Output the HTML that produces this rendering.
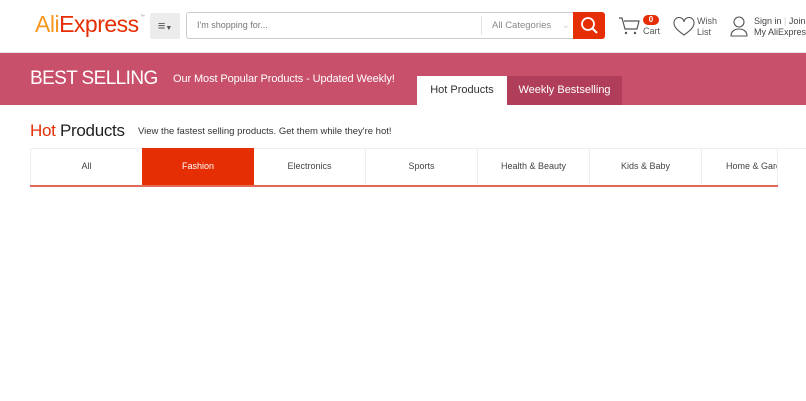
<!DOCTYPE html>
<html><head><meta charset="utf-8"><style>
*{margin:0;padding:0;box-sizing:border-box}
body{width:806px;height:401px;overflow:hidden;background:#fff;font-family:"Liberation Sans",sans-serif;position:relative}
.a{position:absolute}
</style></head><body>
<div class="a" style="left:35px;top:11px;font-size:23px;letter-spacing:-0.5px;color:#e62e04;white-space:nowrap"><span style="color:#f7971e">Ali</span>Express</div>
<div class="a" style="left:140px;top:14px;font-size:5px;color:#999">™</div>
<div class="a" style="left:150px;top:13px;width:30px;height:26px;background:#ececec;border-radius:2px;color:#555;font-size:13px;text-align:center;line-height:26px">≡<span style="font-size:7px">▼</span></div>
<div class="a" style="left:186px;top:12px;width:388px;height:27px;border:1px solid #ccc;border-right:none;border-radius:3px 0 0 3px"></div>
<div class="a" style="left:197px;top:20px;font-size:9px;color:#777">I'm shopping for...</div>
<div class="a" style="left:481px;top:16px;width:1px;height:19px;background:#e5e5e5"></div>
<div class="a" style="left:492px;top:20px;font-size:9.5px;color:#888">All Categories <span style="color:#ccc;margin-left:8px">⌄</span></div>
<div class="a" style="left:573px;top:12px;width:32px;height:27px;background:#e62e04;border-radius:0 3px 3px 0"></div>
<svg class="a" style="left:580px;top:16px" width="18" height="19" viewBox="0 0 18 19"><circle cx="8" cy="8" r="6" fill="none" stroke="#fff" stroke-width="1.8"/><line x1="12.5" y1="12.5" x2="17" y2="17" stroke="#fff" stroke-width="2"/></svg>
<svg class="a" style="left:618px;top:16px" width="22" height="20" viewBox="0 0 22 20"><path d="M1 2h3l3 11h12l2-8H6" fill="none" stroke="#555" stroke-width="1.2"/><circle cx="8" cy="17" r="1.2" fill="#555"/><circle cx="17" cy="17" r="1.2" fill="#555"/></svg>
<div class="a" style="left:643px;top:15px;width:16px;height:10px;background:#e62e04;border-radius:5px;color:#fff;font-size:8px;font-weight:bold;text-align:center;line-height:10px">0</div>
<div class="a" style="left:643px;top:26px;font-size:9px;color:#555">Cart</div>
<svg class="a" style="left:673px;top:17px" width="22" height="20" viewBox="0 0 22 20"><path d="M11 18C4 13 1 10 1 6a5 5 0 0 1 10-1 5 5 0 0 1 10 1c0 4-3 7-10 12z" fill="none" stroke="#555" stroke-width="1.1"/></svg>
<div class="a" style="left:697px;top:16px;font-size:9px;color:#555;line-height:11px">Wish<br>List</div>
<svg class="a" style="left:729px;top:15px" width="20" height="22" viewBox="0 0 20 22"><circle cx="10" cy="7" r="5" fill="none" stroke="#555" stroke-width="1.1"/><path d="M2 21c0-5 4-7 8-7s8 2 8 7z" fill="none" stroke="#555" stroke-width="1.1"/></svg>
<div class="a" style="left:754px;top:16px;font-size:9px;color:#444;line-height:11px;white-space:nowrap">Sign in <span style="color:#ccc">|</span> Join<br>My AliExpress</div>
<div class="a" style="left:0;top:52px;width:806px;height:1px;background:#e8e8e8"></div>
<div class="a" style="left:0;top:53px;width:806px;height:52px;background:#c8506a"></div>
<div class="a" style="left:30px;top:68px;font-size:19px;color:#fff;letter-spacing:-0.6px;white-space:nowrap">BEST SELLING</div>
<div class="a" style="left:173px;top:73px;font-size:11px;color:#fff;white-space:nowrap;letter-spacing:-0.1px">Our Most Popular Products - Updated Weekly!</div>
<div class="a" style="left:417px;top:76px;width:90px;height:29px;background:#fff;font-size:11px;color:#333;text-align:center;line-height:29px">Hot Products</div>
<div class="a" style="left:507px;top:76px;width:115px;height:29px;background:#b03e5a;font-size:11px;color:#fff;text-align:center;line-height:29px">Weekly Bestselling</div>
<div class="a" style="left:30px;top:121px;font-size:17px;color:#222;letter-spacing:-0.3px;white-space:nowrap"><span style="color:#e62e04">Hot</span> Products</div>
<div class="a" style="left:138px;top:126px;font-size:9.5px;color:#333">View the fastest selling products. Get them while they're hot!</div>
<div class="a" style="left:30px;top:148px;width:776px;height:38px;border-top:1px solid #eee"></div>
<div class="a" style="left:30px;top:148px;display:flex;font-size:9px;color:#444">
<div style="width:112px;height:37px;line-height:37px;text-align:center;border-left:1px solid #eee">All</div>
<div style="width:112px;height:37px;line-height:37px;text-align:center;background:#e62e04;color:#fff">Fashion</div>
<div style="width:112px;height:37px;line-height:37px;text-align:center;border-right:1px solid #eee">Electronics</div>
<div style="width:112px;height:37px;line-height:37px;text-align:center;border-right:1px solid #eee">Sports</div>
<div style="width:112px;height:37px;line-height:37px;text-align:center;border-right:1px solid #eee">Health &amp; Beauty</div>
<div style="width:112px;height:37px;line-height:37px;text-align:center;border-right:1px solid #eee">Kids &amp; Baby</div>
<div style="width:76px;height:37px;line-height:37px;text-align:left;padding-left:24px;border-right:1px solid #eee;white-space:nowrap;overflow:hidden">Home &amp; Garden</div>
</div>
<div class="a" style="left:30px;top:185px;width:748px;height:2px;background:#e06a5a"></div>
</body></html>
